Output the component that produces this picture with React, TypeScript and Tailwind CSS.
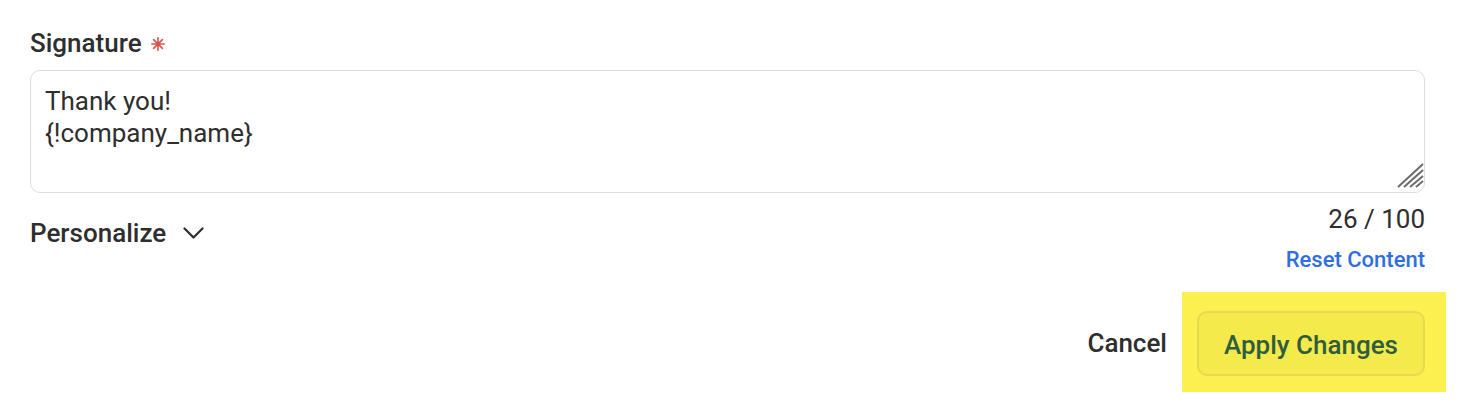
function ResizeGrip() {
  return (
    <svg
      className="pointer-events-none absolute bottom-[4px] right-[1px] h-[26px] w-[28px]"
      viewBox="0 0 28 26"
      fill="none"
      stroke="#6b6b6b"
      strokeWidth="2"
    >
      <line x1="2" y1="24" x2="27" y2="1" />
      <line x1="8" y1="24" x2="27" y2="7" />
      <line x1="14" y1="24" x2="27" y2="13" />
      <line x1="20" y1="24" x2="27" y2="18" />
    </svg>
  );
}

function RequiredMark() {
  return (
    <svg className="ml-[9px] mt-[2px] h-[14px] w-[14px]" viewBox="0 0 14 14" stroke="#d9534a" strokeWidth="1.6" strokeLinecap="round">
      <line x1="7" y1="0.8" x2="7" y2="13.2" />
      <line x1="0.8" y1="7" x2="13.2" y2="7" />
      <line x1="2.6" y1="2.6" x2="11.4" y2="11.4" />
      <line x1="11.4" y1="2.6" x2="2.6" y2="11.4" />
      <circle cx="7" cy="7" r="2.2" fill="#d9534a" stroke="none" />
    </svg>
  );
}

function Chevron() {
  return (
    <svg className="h-[12px] w-[21px]" viewBox="0 0 21 12" fill="none" stroke="#2e2e2e" strokeWidth="2.2" strokeLinecap="round" strokeLinejoin="round">
      <polyline points="1.5,1.5 10.5,10.5 19.5,1.5" />
    </svg>
  );
}

export default function App() {
  return (
    <div className="min-h-screen bg-white pl-[30px] pr-[41px] pt-[27px] font-['Roboto',sans-serif] text-[#2e2e2e]">
      <label htmlFor="signature" className="flex items-center text-[26px] font-medium leading-[32px]">
        Signature
        <RequiredMark />
      </label>

      <div className="relative mt-[11px]">
        <textarea
          id="signature"
          defaultValue={"Thank you!\n{!company_name}"}
          className="block h-[123px] w-full resize-none rounded-[10px] border border-[#dddce2] bg-white px-[14px] pt-[14px] text-[26px] leading-[32px] text-[#2e2e2e] outline-none"
        />
        <ResizeGrip />
      </div>

      <div className="mt-[10px] flex items-start justify-between">
        <button className="mt-[14px] flex items-center gap-[17px] text-[26px] font-medium leading-[32px]">
          Personalize
          <Chevron />
        </button>
        <div className="flex flex-col items-end">
          <span className="text-[26px] leading-[32px]">26 / 100</span>
          <button className="mt-[11px] text-[22px] font-medium leading-[28px] text-[#2f6ee2]">
            Reset Content
          </button>
        </div>
      </div>

      <div className="mt-[18px] flex items-center justify-end">
        <button className="mr-[15px] mt-[2px] text-[26px] font-medium leading-[32px] text-[#2e2e2e]">Cancel</button>
        <div className="mr-[-21px] bg-[#fcef50] pb-[16px] pl-[15px] pr-[21px] pt-[19px]">
          <button className="flex h-[65px] w-[228px] items-center justify-center rounded-[10px] border-2 border-[#e4da50] bg-[#f4ea4b] pt-[2px] text-[26px] font-medium leading-[32px] text-[#2f5e3f]">
            Apply Changes
          </button>
        </div>
      </div>
    </div>
  );
}
